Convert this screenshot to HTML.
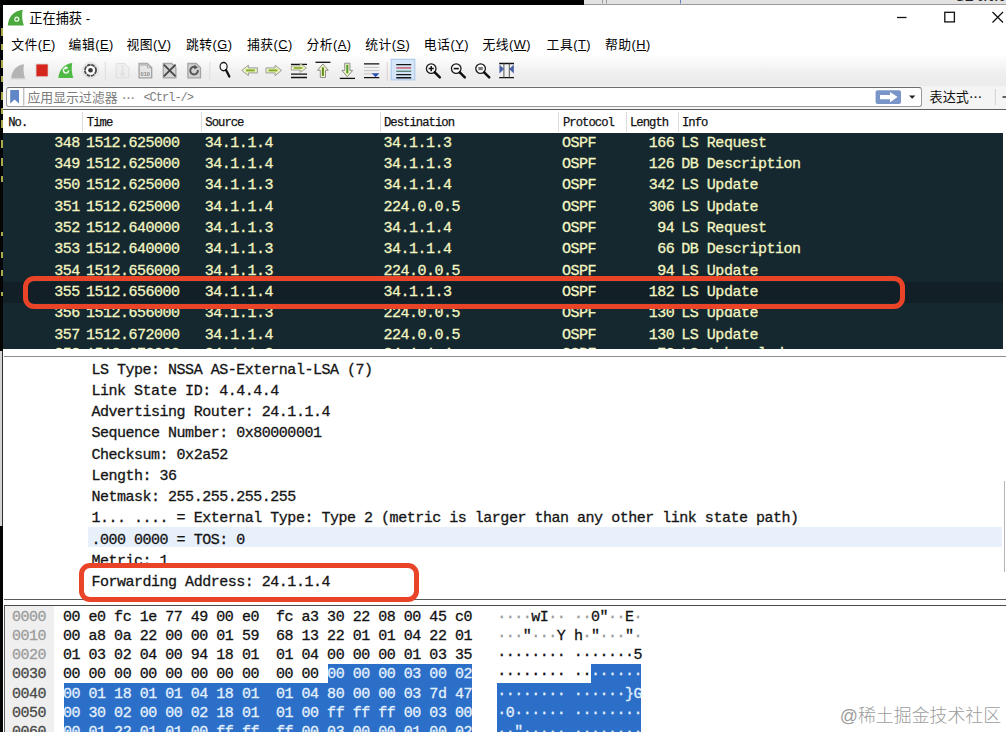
<!DOCTYPE html>
<html lang="zh">
<head>
<meta charset="utf-8">
<title>正在捕获</title>
<style>
html,body{margin:0;padding:0;}
body{width:1006px;height:732px;position:relative;overflow:hidden;background:#fff;
  font-family:"Liberation Sans","Noto Sans CJK SC",sans-serif;}
.abs{position:absolute;}
#topblack{left:0;top:0;width:584px;height:4.5px;background:#000;}
#topgray{left:584px;top:0;width:422px;height:3.5px;background:#e2e2e2;border-bottom:1px solid #9a9a9a;}
#leftblack{left:0;top:0;width:3.2px;height:351px;background:#050505;}
#leftgray{left:0;top:351px;width:2.4px;height:175px;background:#d4d4d4;border-right:1.2px solid #2e2e2e;}
#leftblack2{left:0;top:526px;width:3.4px;height:206px;background:#050505;}
.yl{left:1px;width:1.8px;background:#a9a94a;}
#title{left:29.3px;top:10.9px;font-size:13.2px;line-height:16px;color:#000;white-space:nowrap;}
.menu{top:36.3px;letter-spacing:0.5px;font-size:12.8px;line-height:18px;color:#000;white-space:nowrap;}
.menu u{text-decoration-thickness:1px;text-underline-offset:1px;}
#toolbar{left:3.2px;top:54px;width:1003px;height:32px;background:linear-gradient(#ffffff 0%,#fafafa 20%,#efefef 60%,#ebebeb 100%);}
#filter{left:5.5px;top:86.9px;width:914px;height:18.4px;background:#fff;border:1px solid #9a9a9a;border-top:1.4px solid #6c6c6c;border-radius:3px;}
#filtertxt{left:27.4px;top:88px;font-size:12.9px;line-height:19px;color:#7d7d7d;white-space:nowrap;}
#filtertxt span{font-family:"Liberation Mono",monospace;font-size:12px;letter-spacing:-1px;}
i{font-style:normal;font-family:"Noto Sans CJK SC",sans-serif;}
#ge{right:0;top:-10.5px;font-size:13px;line-height:14px;font-weight:bold;color:#222;white-space:nowrap;}
#frow{left:3.4px;top:86px;width:1003px;height:23px;background:#f4f4f4;}
#expr{left:929.6px;top:87.2px;font-size:13.1px;line-height:19px;color:#111;white-space:nowrap;}
#hdr{left:3.2px;top:108.6px;width:1003px;height:23.4px;background:#fff;border-top:1.3px solid #5e5e5e;}
.h{top:116px;-webkit-text-stroke:0.25px;font-family:"Liberation Mono",monospace;font-size:12.2px;letter-spacing:-0.95px;line-height:14px;color:#111;white-space:nowrap;}
.hs{top:112px;width:1px;height:20px;background:#dcdcdc;}
#plist{left:3.2px;top:132.8px;width:999.6px;height:216.6px;background:#15282f;overflow:hidden;}
.mono{font-family:"Liberation Mono","DejaVu Sans Mono",monospace;font-size:15px;letter-spacing:-0.481px;white-space:pre;-webkit-text-stroke:0.3px;}
.prow{position:absolute;left:0;height:21.31px;line-height:21.31px;color:#f3f5c2;width:1002px;}
.prow span{position:absolute;top:0;}
#detail{left:3.6px;top:356.3px;width:1002.4px;height:241.6px;background:#fff;border-top:1.5px solid #8c8c8c;border-bottom:1.2px solid #5a5a5a;overflow:hidden;}
.drow{position:absolute;left:87.8px;height:21.22px;line-height:21.22px;color:#151515;}
#hex{left:3.9px;top:605.4px;width:1002px;height:127px;background:#fff;border-top:1.3px solid #4a4a4a;overflow:hidden;}
#hexl{left:4.1px;top:606px;width:1px;height:126px;background:#5a5a5a;}
.hrow{position:absolute;left:0;height:19.1px;line-height:19.1px;color:#111;}
.hrow span{position:absolute;top:0;}
.fd{color:#9a9a9a;}
.fd b{font-weight:normal;color:#111;}
.selbg{position:absolute;background:#2b6fc8;}
.sel{color:#e4f1ff;}
.redbox{border:5.8px solid #ea4428;border-radius:11px;box-sizing:border-box;}
#wm{left:839.8px;top:704.4px;font-size:17.9px;line-height:24px;color:#9c9c9c;font-weight:300;white-space:nowrap;}
svg{position:absolute;overflow:visible;}
</style>
</head>
<body>
<div class="abs" id="topblack"></div>
<div class="abs" id="topgray"></div>
<div class="abs" id="leftblack"></div>
<div class="abs" id="leftgray"></div>
<div class="abs" id="leftblack2"></div>
<div class="abs yl" style="top:28px;height:8px"></div>
<div class="abs yl" style="top:44px;height:6px"></div>
<div class="abs yl" style="top:60px;height:8px"></div>
<div class="abs yl" style="top:76px;height:6px"></div>
<div class="abs yl" style="top:92px;height:8px"></div>
<div class="abs yl" style="top:108px;height:6px"></div>
<div class="abs yl" style="top:120px;height:8px"></div>
<div class="abs yl" style="top:140px;height:8px"></div>
<div class="abs yl" style="top:158px;height:8px"></div>
<div class="abs yl" style="top:176px;height:6px"></div>
<div class="abs yl" style="top:232px;height:4px"></div>
<div class="abs yl" style="top:252px;height:6px"></div>
<div class="abs yl" style="top:270px;height:6px"></div>
<div class="abs yl" style="top:292px;height:4px"></div>
<div class="abs" id="title">正在捕获 -</div>
<div class="abs menu" style="left:11.2px">文件(<u>F</u>)</div>
<div class="abs menu" style="left:68.6px">编辑(<u>E</u>)</div>
<div class="abs menu" style="left:126.4px">视图(<u>V</u>)</div>
<div class="abs menu" style="left:186px">跳转(<u>G</u>)</div>
<div class="abs menu" style="left:247px">捕获(<u>C</u>)</div>
<div class="abs menu" style="left:306.4px">分析(<u>A</u>)</div>
<div class="abs menu" style="left:365.2px">统计(<u>S</u>)</div>
<div class="abs menu" style="left:423.8px">电话(<u>Y</u>)</div>
<div class="abs menu" style="left:482.4px">无线(<u>W</u>)</div>
<div class="abs menu" style="left:546.6px">工具(<u>T</u>)</div>
<div class="abs menu" style="left:605px">帮助(<u>H</u>)</div>
<div class="abs" id="toolbar"></div>
<div class="abs" id="frow"></div>
<div class="abs" id="ge">GE 0/0/0</div>
<div class="abs" id="filter"></div>
<svg class="abs" style="left:0;top:0" width="1006" height="732" viewBox="0 0 1006 732">
<defs>
<path id="fin" d="M0,14 C0.6,6.5 5,1 12.8,0 C12,4.5 12.3,10 13.8,14 Z"/>
<path id="page" d="M0.7,0.7 H9 L13.3,5 V15 H0.7 Z"/>
<g id="mag"><circle cx="0" cy="0" r="4.8" fill="#fbfbfb" stroke="#1a1a1a" stroke-width="1.3"/><path d="M3.6,3.8 L8.6,8.8" stroke="#111" stroke-width="2.5" stroke-linecap="round"/></g>
<path id="harrow" d="M0,5.2 L6.6,0 V2.7 H15.6 V7.7 H6.6 V10.4 Z"/>
<path id="varrow" d="M5.4,0 L10.8,6.4 H8 V13.6 H2.8 V6.4 H0 Z"/>
</defs>
<!-- title icon -->
<g transform="translate(7.8,9.8) scale(1.16,1.12)"><use href="#fin" fill="#4aa83c"/></g>
<circle cx="16.8" cy="19.2" r="2.6" fill="#e6f4e2"/><circle cx="16.8" cy="19.2" r="1.2" fill="#4aa83c"/>
<!-- window controls -->
<path d="M897,17.5 H906.5" stroke="#111" stroke-width="1.3"/>
<rect x="944.8" y="12.3" width="9.6" height="9.6" fill="none" stroke="#111" stroke-width="1.3"/>
<path d="M992.5,12 L1003,22.5 M1003,12 L992.5,22.5" stroke="#111" stroke-width="1.3"/>
<!-- top-right background window fragments -->
<path d="M602.5,0 V3.5 M606.5,0 V3.5" stroke="#9a9a9a" stroke-width="1"/><path d="M680.5,0 V3.5" stroke="#6a78b8" stroke-width="1"/>
<!-- toolbar: 1 gray fin -->
<g transform="translate(11.2,64.2)"><use href="#fin" fill="#b4b4b4"/><path d="M-0.5,14.6 H14.2" stroke="#c8c8c8" stroke-width="0.8"/></g>
<!-- 2 stop -->
<rect x="35.2" y="63.3" width="13.6" height="14" fill="#e4e4e4"/><rect x="36.4" y="64.4" width="11.3" height="11.9" fill="#d5261d"/>
<!-- 3 green fin restart -->
<g transform="translate(58.4,63) scale(1.08,1.07)"><use href="#fin" fill="#4fb946"/></g>
<path d="M68.6,70.2 a2.6,2.6 0 1 1 -2.2,-2.4" fill="none" stroke="#f2fbef" stroke-width="1.5"/><path d="M65.6,65.8 L68.3,67.9 L65.3,69.6 Z" fill="#f2fbef"/>
<!-- 4 options gear -->
<circle cx="90.5" cy="70.3" r="7.7" fill="#fdfdfd" stroke="#d4d4d4" stroke-width="0.9"/>
<circle cx="90.5" cy="70.3" r="5.6" fill="none" stroke="#505050" stroke-width="1.9" stroke-dasharray="3.8 0.6"/>
<circle cx="90.5" cy="70.3" r="2.3" fill="#3a3a3a"/>
<path d="M105.3,62 V80.5 M209.8,62 V80.5" stroke="#e0e0e0" stroke-width="1.2"/>
<path d="M387.3,62 V80.5" stroke="#e2d6d6" stroke-width="1.2"/>
<!-- 6 faint file -->
<g transform="translate(115.5,62.8)" opacity="0.55"><use href="#page" fill="#ececec" stroke="#d0d0d0" stroke-width="1"/><path d="M7,2 V12 M4.8,10 L7,13 L9.2,10" stroke="#d4d4d4" stroke-width="1.4" fill="none"/></g>
<!-- 7 file 010 -->
<g transform="translate(138.4,62.8)"><use href="#page" fill="#e6e6e6" stroke="#a0a0a0" stroke-width="1.3"/><path d="M9,0.7 V5 H13.3" fill="none" stroke="#a9a9a9" stroke-width="1"/><path d="M0.7,0.7 H9 L11,3 H0.7 Z" fill="#bdbdbd"/></g>
<text x="140.6" y="75.6" font-family="Liberation Sans, sans-serif" font-size="5.6" fill="#8a8a8a" font-weight="bold">010</text>
<!-- 8 file X -->
<g transform="translate(162.6,62.8)"><use href="#page" fill="#d6d6d6" stroke="#a4a4a4" stroke-width="1.3"/><path d="M1.2,1.8 L13,13.6 M13,1.8 L1.2,13.6" stroke="#484848" stroke-width="1.9"/></g>
<!-- 9 reload file -->
<g transform="translate(187.2,62.8)"><use href="#page" fill="#d2d2d2" stroke="#a4a4a4" stroke-width="1.3"/><path d="M10.6,7.2 a3.8,3.8 0 1 1 -2.6,-3" fill="none" stroke="#555" stroke-width="2"/><path d="M7.2,2 L10.8,4.6 L7,6.6 Z" fill="#555"/></g>
<!-- 11 find -->
<g transform="translate(223.6,66.6) scale(0.8,0.95)"><circle cx="0" cy="0" r="4.4" fill="#fbfbfb" stroke="#1a1a1a" stroke-width="1.5"/><path d="M3,3.6 L7.2,10.4" stroke="#111" stroke-width="2.6" stroke-linecap="round"/></g>
<!-- 12, 13 arrows -->
<g transform="translate(241.8,65.2)"><use href="#harrow" fill="#ecf4c0" stroke="#9b9b9b" stroke-width="1"/><path d="M4.2,5.2 H13" stroke="#86ad2a" stroke-width="2"/></g>
<g transform="translate(281.6,65.2) scale(-1,1)"><use href="#harrow" fill="#ecf4c0" stroke="#9b9b9b" stroke-width="1"/><path d="M4.2,5.2 H13" stroke="#86ad2a" stroke-width="2"/></g>
<!-- 14 goto -->
<path d="M291,64.3 H307 M291,74.2 H307 M291,77.5 H307" stroke="#111" stroke-width="1.3"/>
<g transform="translate(306.6,63.6) scale(-0.98,0.84)"><use href="#harrow" fill="#ecf4c0" stroke="#9b9b9b" stroke-width="1"/><path d="M4.2,5.2 H13" stroke="#86ad2a" stroke-width="2"/></g>
<!-- 15 up -->
<path d="M315.5,62.3 H330.4" stroke="#111" stroke-width="1.3"/>
<g transform="translate(317.5,63.9)"><use href="#varrow" fill="#eef4c4" stroke="#8f8f8f" stroke-width="1"/><path d="M5.4,3.4 V12" stroke="#5e8a1a" stroke-width="2"/></g>
<!-- 16 down -->
<path d="M339.8,78.4 H355" stroke="#111" stroke-width="1.3"/>
<g transform="translate(341.9,76.8) scale(1,-1)"><use href="#varrow" fill="#eef4c4" stroke="#8f8f8f" stroke-width="1"/><path d="M5.4,3.4 V12" stroke="#4f9a2a" stroke-width="2"/></g>
<!-- 17 autoscroll -->
<path d="M364,63.9 H379.3 M364,77.6 H379.3" stroke="#111" stroke-width="1.3"/><path d="M364,67.4 H379.3 M364,70.6 H379.3 M364,73.8 H372" stroke="#c4c4c4" stroke-width="1"/><path d="M371.6,73.2 H379.4 L375.6,77.2 Z" fill="#2d50b4"/>
<!-- 19 colorize -->
<rect x="391.2" y="59.3" width="23.6" height="20.6" fill="#d5e6f8" stroke="#a6c6ea" stroke-width="1"/>
<path d="M396.3,64.6 H411.2 M396.3,74.6 H411.2 M396.3,77.8 H411.2" stroke="#151515" stroke-width="1.4"/><path d="M396.3,67.9 H411.2" stroke="#c6606c" stroke-width="1.5"/><path d="M396.3,71.3 H411.2" stroke="#5c8478" stroke-width="1.4"/>
<!-- 20-22 zoom -->
<use href="#mag" x="431.2" y="68.6"/><path d="M428.6,68.6 H433.8 M431.2,66 V71.2" stroke="#111" stroke-width="1.5"/>
<use href="#mag" x="456.2" y="68.6"/><path d="M453.6,68.6 H458.8" stroke="#111" stroke-width="1.6"/>
<use href="#mag" x="480.6" y="68.6"/><rect x="478.4" y="67" width="4.4" height="3.2" fill="#777"/>
<!-- 23 resize columns -->
<path d="M499.2,63.5 H514 M499.2,77.6 H514" stroke="#111" stroke-width="1.3"/><path d="M503.9,63.5 V77.6 M509.3,63.5 V77.6" stroke="#555" stroke-width="1"/><path d="M500,66 L503.2,69 L500,72 Z M513.2,66 L510,69 L513.2,72 Z" fill="#4a62a2" stroke="#4a62a2" stroke-width="1.2"/>
<!-- filter bar -->
<path d="M10.2,90 H19 V103.6 L14.6,99.6 L10.2,103.6 Z" fill="#5f86c6"/>
<path d="M23.8,88 V105.5" stroke="#a8a8a8" stroke-width="1"/>
<rect x="875.6" y="90.3" width="25.4" height="13.6" rx="2" fill="#7a96c8"/>
<path d="M880,94.9 H890 V92 L897.6,97.1 L890,102.2 V99.3 H880 Z" fill="#fff"/>
<path d="M909,95.6 H915.4 L912.2,98.8 Z" fill="#222"/>
<path d="M995.3,89 V105" stroke="#d0d0d0" stroke-width="1"/><path d="M1002.5,97 H1006" stroke="#222" stroke-width="1.4"/>
</svg>

<div class="abs" id="filtertxt">应用显示过滤器<i style="position:absolute;left:94.5px;top:0">…</i><span style="position:absolute;left:116px;top:1.2px">&lt;Ctrl-/&gt;</span></div>
<div class="abs" id="expr">表达式<i>…</i></div>
<div class="abs" id="hdr"></div>
<div class="abs hs" style="left:82px"></div>
<div class="abs hs" style="left:201px"></div>
<div class="abs hs" style="left:380px"></div>
<div class="abs hs" style="left:558px"></div>
<div class="abs hs" style="left:626px"></div>
<div class="abs hs" style="left:677.5px"></div>
<div class="abs h" style="left:8.2px">No.</div>
<div class="abs h" style="left:86.8px">Time</div>
<div class="abs h" style="left:205.3px">Source</div>
<div class="abs h" style="left:384px">Destination</div>
<div class="abs h" style="left:563px">Protocol</div>
<div class="abs h" style="left:630px">Length</div>
<div class="abs h" style="left:682px">Info</div>
<div class="abs mono" id="plist">
<div class="abs" style="left:0;top:149px;width:1000px;height:21px;background:#121f26"></div>
<div class="prow" style="top:0.1px"><span style="left:51.0px">348</span><span style="left:82.7px">1512.625000</span><span style="left:201.6px">34.1.1.4</span><span style="left:380.2px">34.1.1.3</span><span style="left:558.7px">OSPF</span><span style="left:645.5px">166</span><span style="left:678.1px">LS Request</span></div>
<div class="prow" style="top:21.4px"><span style="left:51.0px">349</span><span style="left:82.7px">1512.625000</span><span style="left:201.6px">34.1.1.4</span><span style="left:380.2px">34.1.1.3</span><span style="left:558.7px">OSPF</span><span style="left:645.5px">126</span><span style="left:678.1px">DB Description</span></div>
<div class="prow" style="top:42.7px"><span style="left:51.0px">350</span><span style="left:82.7px">1512.625000</span><span style="left:201.6px">34.1.1.3</span><span style="left:380.2px">34.1.1.4</span><span style="left:558.7px">OSPF</span><span style="left:645.5px">342</span><span style="left:678.1px">LS Update</span></div>
<div class="prow" style="top:64.0px"><span style="left:51.0px">351</span><span style="left:82.7px">1512.625000</span><span style="left:201.6px">34.1.1.4</span><span style="left:380.2px">224.0.0.5</span><span style="left:558.7px">OSPF</span><span style="left:645.5px">306</span><span style="left:678.1px">LS Update</span></div>
<div class="prow" style="top:85.3px"><span style="left:51.0px">352</span><span style="left:82.7px">1512.640000</span><span style="left:201.6px">34.1.1.3</span><span style="left:380.2px">34.1.1.4</span><span style="left:558.7px">OSPF</span><span style="left:654.1px">94</span><span style="left:678.1px">LS Request</span></div>
<div class="prow" style="top:106.6px"><span style="left:51.0px">353</span><span style="left:82.7px">1512.640000</span><span style="left:201.6px">34.1.1.3</span><span style="left:380.2px">34.1.1.4</span><span style="left:558.7px">OSPF</span><span style="left:654.1px">66</span><span style="left:678.1px">DB Description</span></div>
<div class="prow" style="top:127.9px"><span style="left:51.0px">354</span><span style="left:82.7px">1512.656000</span><span style="left:201.6px">34.1.1.3</span><span style="left:380.2px">224.0.0.5</span><span style="left:558.7px">OSPF</span><span style="left:654.1px">94</span><span style="left:678.1px">LS Update</span></div>
<div class="prow" style="top:149.2px"><span style="left:51.0px">355</span><span style="left:82.7px">1512.656000</span><span style="left:201.6px">34.1.1.4</span><span style="left:380.2px">34.1.1.3</span><span style="left:558.7px">OSPF</span><span style="left:645.5px">182</span><span style="left:678.1px">LS Update</span></div>
<div class="prow" style="top:170.5px"><span style="left:51.0px">356</span><span style="left:82.7px">1512.656000</span><span style="left:201.6px">34.1.1.3</span><span style="left:380.2px">224.0.0.5</span><span style="left:558.7px">OSPF</span><span style="left:645.5px">130</span><span style="left:678.1px">LS Update</span></div>
<div class="prow" style="top:191.8px"><span style="left:51.0px">357</span><span style="left:82.7px">1512.672000</span><span style="left:201.6px">34.1.1.4</span><span style="left:380.2px">224.0.0.5</span><span style="left:558.7px">OSPF</span><span style="left:645.5px">130</span><span style="left:678.1px">LS Update</span></div>
<div class="prow" style="top:211.0px"><span style="left:51.0px">358</span><span style="left:82.7px">1512.672000</span><span style="left:201.6px">34.1.1.3</span><span style="left:380.2px">34.1.1.4</span><span style="left:558.7px">OSPF</span><span style="left:654.1px">78</span><span style="left:678.1px">LS Acknowledge</span></div>
</div>
<div class="abs redbox" style="left:23.3px;top:276px;width:882.2px;height:33.2px"></div>
<div class="abs mono" id="detail">
<div class="abs" style="left:84px;top:169.8px;width:914px;height:20.4px;background:#e8f0fb"></div>
<div class="drow" style="top:2.5px">LS Type: NSSA AS-External-LSA (7)</div>
<div class="drow" style="top:23.7px">Link State ID: 4.4.4.4</div>
<div class="drow" style="top:44.9px">Advertising Router: 24.1.1.4</div>
<div class="drow" style="top:66.2px">Sequence Number: 0x80000001</div>
<div class="drow" style="top:87.4px">Checksum: 0x2a52</div>
<div class="drow" style="top:108.6px">Length: 36</div>
<div class="drow" style="top:129.8px">Netmask: 255.255.255.255</div>
<div class="drow" style="top:151.0px">1... .... = External Type: Type 2 (metric is larger than any other link state path)</div>
<div class="drow" style="top:172.3px">.000 0000 = TOS: 0</div>
<div class="drow" style="top:193.5px">Metric: 1</div>
<div class="drow" style="top:214.7px">Forwarding Address: 24.1.1.4</div>
</div>
<div class="abs" style="left:1004.2px;top:481px;width:1px;height:91px;background:#b4b4b4"></div>
<div class="abs redbox" style="left:79px;top:562.6px;width:340px;height:39.8px"></div>
<div class="abs mono" id="hex">
<div class="abs" style="left:0;top:0;width:50.3px;height:127px;background:#efefef"></div>
<div class="selbg" style="left:324.0px;top:57.3px;width:143.90000000000003px;height:19.2px"></div>
<div class="selbg" style="left:586.7px;top:57.3px;width:50.60000000000002px;height:19.2px"></div>
<div class="selbg" style="left:59.9px;top:76.4px;width:408.0px;height:60px"></div>
<div class="selbg" style="left:492.90000000000003px;top:76.4px;width:144.40000000000003px;height:60px"></div>
<div class="hrow" style="top:1.8px"><span style="left:8.1px;color:#9c9c9c">0000</span><span style="left:59.1px">00 e0 fc 1e 77 49 00 e0  fc a3 30 22 08 00 45 c0</span><span class="fd" style="left:493.3px">····<b>wI</b>·· ··<b>0&quot;</b>··<b>E</b>·</span></div>
<div class="hrow" style="top:20.9px"><span style="left:8.1px;color:#9c9c9c">0010</span><span style="left:59.1px">00 a8 0a 22 00 00 01 59  68 13 22 01 01 04 22 01</span><span class="fd" style="left:493.3px">···<b>&quot;</b>···<b>Y</b> <b>h</b>·<b>&quot;</b>···<b>&quot;</b>·</span></div>
<div class="hrow" style="top:40.0px"><span style="left:8.1px;color:#9c9c9c">0020</span><span style="left:59.1px">01 03 02 04 00 94 18 01  01 04 00 00 00 01 03 35</span><span style="left:493.3px">········ ·······5</span></div>
<div class="hrow" style="top:59.1px"><span style="left:8.1px;color:#4a4a4a">0030</span><span style="left:59.1px">00 00 00 00 00 00 00 00  00 00 <span class="sel" style="position:static">00 00 00 03 00 02</span></span><span style="left:493.3px">········ ··<span class="sel" style="position:static">······</span></span></div>
<div class="hrow" style="top:78.2px"><span style="left:8.1px;color:#4a4a4a">0040</span><span class="sel" style="left:59.1px">00 01 18 01 01 04 18 01  01 04 80 00 00 03 7d 47</span><span class="sel" style="left:493.3px">········ ······}G</span></div>
<div class="hrow" style="top:97.3px"><span style="left:8.1px;color:#4a4a4a">0050</span><span class="sel" style="left:59.1px">00 30 02 00 00 02 18 01  01 00 ff ff ff 00 03 00</span><span class="sel" style="left:493.3px">·0······ ········</span></div>
<div class="hrow" style="top:116.4px"><span style="left:8.1px;color:#4a4a4a">0060</span><span class="sel" style="left:59.1px">00 01 22 01 01 00 ff ff  ff 00 03 00 00 01 00 02</span><span class="sel" style="left:493.3px">··&quot;····· ········</span></div>
</div>
<div class="abs" id="hexl"></div>
<div class="abs" id="wm">@稀土掘金技术社区</div>
</body>
</html>
